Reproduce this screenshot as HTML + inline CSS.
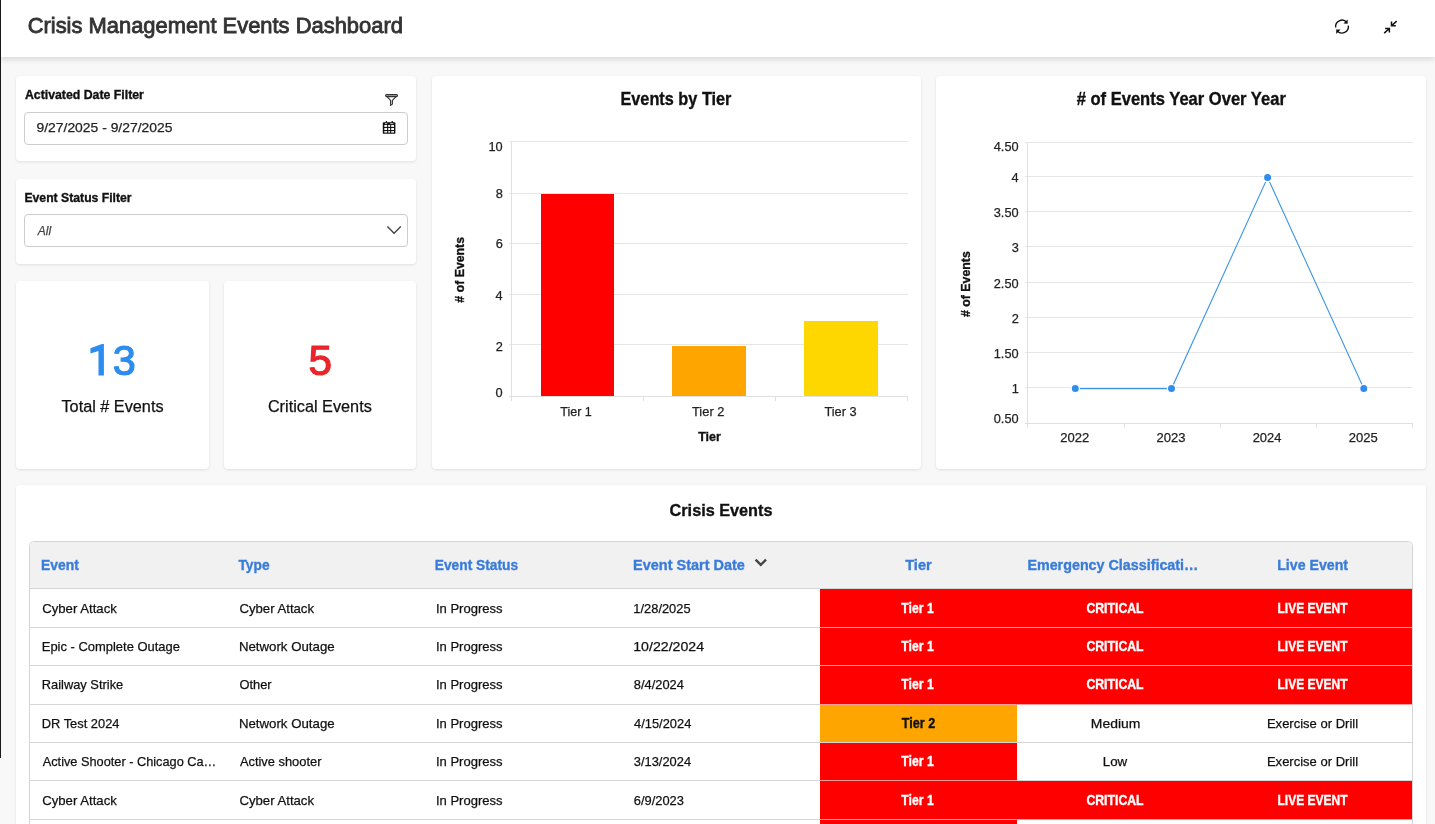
<!DOCTYPE html>
<html><head><meta charset="utf-8">
<style>
*{box-sizing:border-box}
html,body{margin:0;padding:0}
body{width:1435px;height:824px;overflow:hidden;background:#f8f8f8;font-family:"Liberation Sans",sans-serif;position:relative;color:#111}
.abs{position:absolute}
#edge{left:0;top:0;width:1px;height:758px;background:#1a1a1a;z-index:9}
#hdr{left:0;top:0;width:1435px;height:57px;background:#fff;box-shadow:0 3px 5px rgba(0,0,0,.11);z-index:2}
.card{position:absolute;background:#fff;border-radius:4px;box-shadow:0 1px 3px rgba(0,0,0,.10)}
.inp{position:absolute;left:8px;width:384px;height:33px;border:1px solid #cdcdcd;border-radius:4px;background:#fff}
svg text{font-family:"Liberation Sans",sans-serif}
</style></head><body>
<div id="edge" class="abs"></div>
<div id="hdr" class="abs">
  <svg class="abs" style="left:1330px;top:14px" width="24" height="26" viewBox="1330 14 24 26">
    <path d="M1335.66 27.49 A6.4 6.4 0 0 1 1346.76 22.32" fill="none" stroke="#111" stroke-width="1.4"/>
    <path d="M1347.6 19.4 L1347.7 23.7 L1343.5 23.5 Z" fill="#111"/>
    <path d="M1348.34 25.71 A6.4 6.4 0 0 1 1337.24 30.88" fill="none" stroke="#111" stroke-width="1.4"/>
    <path d="M1336.3 33.9 L1336.2 29.4 L1340.5 29.6 Z" fill="#111"/>
  </svg>
  <svg class="abs" style="left:1380px;top:16px" width="22" height="22" viewBox="1380 16 22 22">
    <path d="M1396.7 21.1 L1391.5 25.8 M1391.5 21.5 V25.8 H1395.8" fill="none" stroke="#111" stroke-width="1.5"/>
    <path d="M1384.2 33.1 L1389.4 28.5 M1385.1 28.5 H1389.4 V32.6" fill="none" stroke="#111" stroke-width="1.5"/>
  </svg>
</div>

<div class="card" style="left:16px;top:76px;width:400px;height:85px">
  <div class="inp" style="top:36px"></div>
  <svg class="abs" style="left:366px;top:16px" width="20" height="16" viewBox="382 92 20 16">
    <rect x="385.6" y="94.6" width="11.9" height="2.0" rx="1" fill="#b4b4b4" stroke="#333" stroke-width="1.1"/>
    <path d="M387.2 96.9 L390.6 100.4 V105.4 L392.4 104.1 V100.4 L395.9 96.9" fill="none" stroke="#333" stroke-width="1.15" stroke-linejoin="round"/>
  </svg>
  <svg class="abs" style="left:364px;top:43px" width="18" height="18" viewBox="380 119 18 18">
    <rect x="382.8" y="122.3" width="12.6" height="11.5" rx="0.9" fill="#111"/>
    <rect x="384.3" y="125.0" width="2.8" height="1.9" fill="#fff"/><rect x="384.3" y="128.0" width="2.8" height="2.0" fill="#fff"/><rect x="384.3" y="131.1" width="2.8" height="1.5" fill="#fff"/><rect x="388.2" y="125.0" width="1.9" height="1.9" fill="#fff"/><rect x="388.2" y="128.0" width="1.9" height="2.0" fill="#fff"/><rect x="388.2" y="131.1" width="1.9" height="1.5" fill="#fff"/><rect x="391.2" y="125.0" width="2.8" height="1.9" fill="#fff"/><rect x="391.2" y="128.0" width="2.8" height="2.0" fill="#fff"/><rect x="391.2" y="131.1" width="2.8" height="1.5" fill="#fff"/>
    <rect x="385.0" y="123.2" width="2.2" height="0.9" fill="#fff"/><rect x="390.3" y="123.2" width="3.0" height="0.9" fill="#fff"/>
    <rect x="385.8" y="121.0" width="1.1" height="2.2" fill="#111"/><rect x="391.6" y="121.0" width="1.3" height="2.2" fill="#111"/>
  </svg>
</div>

<div class="card" style="left:16px;top:179px;width:400px;height:85px">
  <div class="inp" style="top:35px"></div>
  <svg class="abs" style="left:368px;top:45px" width="20" height="12" viewBox="384 224 20 12">
    <path d="M387.4 226.6 L394.1 233.3 L400.8 226.6" fill="none" stroke="#444" stroke-width="1.4"/>
  </svg>
</div>

<div class="card" style="left:16px;top:281px;width:193px;height:188px"></div>
<div class="card" style="left:224px;top:281px;width:192px;height:188px"></div>
<div class="card" style="left:432px;top:76px;width:489px;height:393px"></div>
<div class="card" style="left:936px;top:76px;width:490px;height:393px"></div>
<div class="card" style="left:16px;top:485px;width:1410px;height:400px"></div>

<svg class="abs" style="left:0;top:0;z-index:3;will-change:transform" width="1435" height="824" viewBox="0 0 1435 824">
<rect x="509" y="141" width="399" height="1" fill="#e6e6e6"/>
<rect x="509" y="193" width="399" height="1" fill="#e6e6e6"/>
<rect x="509" y="243" width="399" height="1" fill="#e6e6e6"/>
<rect x="509" y="294" width="399" height="1" fill="#e6e6e6"/>
<rect x="509" y="344" width="399" height="1" fill="#e6e6e6"/>
<rect x="511" y="141" width="1" height="259" fill="#e0e0e0"/>
<rect x="509" y="396" width="399" height="1" fill="#e0e0e0"/>
<rect x="511" y="396" width="1" height="5" fill="#e0e0e0"/>
<rect x="643" y="396" width="1" height="5" fill="#e0e0e0"/>
<rect x="775" y="396" width="1" height="5" fill="#e0e0e0"/>
<rect x="907" y="396" width="1" height="5" fill="#e0e0e0"/>
<rect x="541" y="194" width="73" height="202" fill="#ff0000"/>
<rect x="672" y="346" width="74" height="50" fill="#ffa500"/>
<rect x="804" y="321" width="74" height="75" fill="#ffd700"/>
<rect x="1025" y="387" width="388" height="1" fill="#e6e6e6"/>
<rect x="1025" y="352" width="388" height="1" fill="#e6e6e6"/>
<rect x="1025" y="317" width="388" height="1" fill="#e6e6e6"/>
<rect x="1025" y="282" width="388" height="1" fill="#e6e6e6"/>
<rect x="1025" y="246" width="388" height="1" fill="#e6e6e6"/>
<rect x="1025" y="211" width="388" height="1" fill="#e6e6e6"/>
<rect x="1025" y="176" width="388" height="1" fill="#e6e6e6"/>
<rect x="1025" y="142" width="388" height="1" fill="#e6e6e6"/>
<rect x="1027" y="142" width="1" height="285" fill="#e0e0e0"/>
<rect x="1025" y="423" width="388" height="1" fill="#e0e0e0"/>
<rect x="1027" y="423" width="1" height="5" fill="#e0e0e0"/>
<rect x="1124" y="423" width="1" height="5" fill="#e0e0e0"/>
<rect x="1220" y="423" width="1" height="5" fill="#e0e0e0"/>
<rect x="1316" y="423" width="1" height="5" fill="#e0e0e0"/>
<rect x="1412" y="423" width="1" height="5" fill="#e0e0e0"/>
<polyline points="1075.3,388.6 1171.5,388.6 1267.6,177.6 1363.8,388.6" fill="none" stroke="#3d95e6" stroke-width="1.1"/>
<circle cx="1075.3" cy="388.6" r="4.1" fill="#2f8eeb" stroke="#fff" stroke-width="1.2"/>
<circle cx="1171.5" cy="388.6" r="4.1" fill="#2f8eeb" stroke="#fff" stroke-width="1.2"/>
<circle cx="1267.6" cy="177.6" r="4.1" fill="#2f8eeb" stroke="#fff" stroke-width="1.2"/>
<circle cx="1363.8" cy="388.6" r="4.1" fill="#2f8eeb" stroke="#fff" stroke-width="1.2"/>
<path d="M29.5 900 V545.5 Q29.5 541.5 33.5 541.5 H1408.5 Q1412.5 541.5 1412.5 545.5 V900" fill="#fff" stroke="#d5d5d5" stroke-width="1"/>
<path d="M30 589.0 V545.5 Q30 542 33.5 542 H1408.5 Q1412 542 1412 545.5 V589.0 Z" fill="#f1f1f1"/>
<rect x="30" y="588.0" width="1382" height="1" fill="#d5d5d5"/>
<rect x="820" y="589" width="197" height="38" fill="#ff0000"/>
<rect x="1017" y="589" width="197" height="38" fill="#ff0000"/>
<rect x="1214" y="589" width="198" height="38" fill="#ff0000"/>
<rect x="820" y="627" width="197" height="39" fill="#ff0000"/>
<rect x="1017" y="627" width="197" height="39" fill="#ff0000"/>
<rect x="1214" y="627" width="198" height="39" fill="#ff0000"/>
<rect x="820" y="666" width="197" height="38" fill="#ff0000"/>
<rect x="1017" y="666" width="197" height="38" fill="#ff0000"/>
<rect x="1214" y="666" width="198" height="38" fill="#ff0000"/>
<rect x="820" y="704" width="197" height="39" fill="#ffa500"/>
<rect x="820" y="743" width="197" height="38" fill="#ff0000"/>
<rect x="820" y="781" width="197" height="38" fill="#ff0000"/>
<rect x="1017" y="781" width="197" height="38" fill="#ff0000"/>
<rect x="1214" y="781" width="198" height="38" fill="#ff0000"/>
<rect x="820" y="819" width="197" height="39" fill="#ff0000"/>
<rect x="30" y="627" width="1382" height="1" fill="#d6d6d6"/>
<rect x="820" y="627" width="197" height="1" fill="#ff9c9c"/>
<rect x="1017" y="627" width="197" height="1" fill="#ff9c9c"/>
<rect x="1214" y="627" width="198" height="1" fill="#ff9c9c"/>
<rect x="30" y="665" width="1382" height="1" fill="#d6d6d6"/>
<rect x="820" y="665" width="197" height="1" fill="#ff9c9c"/>
<rect x="1017" y="665" width="197" height="1" fill="#ff9c9c"/>
<rect x="1214" y="665" width="198" height="1" fill="#ff9c9c"/>
<rect x="30" y="704" width="1382" height="1" fill="#d6d6d6"/>
<rect x="820" y="704" width="197" height="1" fill="#ff9c9c"/>
<rect x="1017" y="704" width="197" height="1" fill="#ff9c9c"/>
<rect x="1214" y="704" width="198" height="1" fill="#ff9c9c"/>
<rect x="30" y="742" width="1382" height="1" fill="#d6d6d6"/>
<rect x="30" y="780" width="1382" height="1" fill="#d6d6d6"/>
<rect x="820" y="780" width="197" height="1" fill="#ff9c9c"/>
<rect x="30" y="819" width="1382" height="1" fill="#d6d6d6"/>
<rect x="820" y="819" width="197" height="1" fill="#ff9c9c"/>
<rect x="1017" y="819" width="197" height="1" fill="#ff9c9c"/>
<rect x="1214" y="819" width="198" height="1" fill="#ff9c9c"/>
<rect x="30" y="857" width="1382" height="1" fill="#d6d6d6"/>
<rect x="820" y="857" width="197" height="1" fill="#ff9c9c"/>
<path d="M90.4 348.2 L101.9 343.9 H103.9 V375.5 H98.5 V350.9 L90.4 353.4 Z" fill="#2c8cef"/>
<path d="M755.6 559.6 L760.8 564.8 L766 559.6" fill="none" stroke="#444" stroke-width="2.4"/>
<text x="27.65" y="33.30" font-size="22.464" fill="#333" stroke="#333" stroke-width="0.85" textLength="375.28" lengthAdjust="spacingAndGlyphs">Crisis Management Events Dashboard</text>
<text x="24.93" y="99.20" font-size="12.638" fill="#111" stroke="#111" stroke-width="0.35" font-weight="bold" textLength="118.97" lengthAdjust="spacingAndGlyphs">Activated Date Filter</text>
<text x="36.51" y="132.30" font-size="13.478" fill="#222" stroke="#222" stroke-width="0.25" textLength="135.95" lengthAdjust="spacingAndGlyphs">9/27/2025 - 9/27/2025</text>
<text x="24.45" y="201.90" font-size="12.638" fill="#111" stroke="#111" stroke-width="0.35" font-weight="bold" textLength="107.18" lengthAdjust="spacingAndGlyphs">Event Status Filter</text>
<text x="37.69" y="235.00" font-size="13.623" fill="#444" stroke="#444" stroke-width="0.25" font-style="italic" textLength="13.36" lengthAdjust="spacingAndGlyphs">All</text>
<text x="112.72" y="375.20" font-size="43.188" fill="#2c8cef" stroke="#2c8cef" stroke-width="1.2" textLength="23.08" lengthAdjust="spacingAndGlyphs">3</text>
<text x="61.48" y="412.10" font-size="16.522" fill="#111" stroke="#111" stroke-width="0.25" textLength="102.09" lengthAdjust="spacingAndGlyphs">Total # Events</text>
<text x="308.58" y="375.20" font-size="43.188" fill="#ec2329" stroke="#ec2329" stroke-width="1.2" textLength="23.55" lengthAdjust="spacingAndGlyphs">5</text>
<text x="267.89" y="412.10" font-size="16.522" fill="#111" stroke="#111" stroke-width="0.25" textLength="103.93" lengthAdjust="spacingAndGlyphs">Critical Events</text>
<text x="620.46" y="105.40" font-size="17.855" fill="#111" stroke="#111" stroke-width="0.35" font-weight="bold" textLength="111.02" lengthAdjust="spacingAndGlyphs">Events by Tier</text>
<text x="488.45" y="150.90" font-size="13.188" fill="#222" stroke="#222" stroke-width="0.25" textLength="14.22" lengthAdjust="spacingAndGlyphs">10</text>
<text x="495.73" y="198.00" font-size="13.188" fill="#222" stroke="#222" stroke-width="0.25" textLength="7.11" lengthAdjust="spacingAndGlyphs">8</text>
<text x="495.73" y="248.40" font-size="13.188" fill="#222" stroke="#222" stroke-width="0.25" textLength="7.11" lengthAdjust="spacingAndGlyphs">6</text>
<text x="495.48" y="299.50" font-size="13.188" fill="#222" stroke="#222" stroke-width="0.25" textLength="7.11" lengthAdjust="spacingAndGlyphs">4</text>
<text x="495.73" y="350.50" font-size="13.188" fill="#222" stroke="#222" stroke-width="0.25" textLength="7.11" lengthAdjust="spacingAndGlyphs">2</text>
<text x="495.48" y="397.10" font-size="13.188" fill="#222" stroke="#222" stroke-width="0.25" textLength="7.11" lengthAdjust="spacingAndGlyphs">0</text>
<text x="560.19" y="415.60" font-size="13.478" fill="#222" stroke="#222" stroke-width="0.25" textLength="31.62" lengthAdjust="spacingAndGlyphs">Tier 1</text>
<text x="691.99" y="415.60" font-size="13.478" fill="#222" stroke="#222" stroke-width="0.25" textLength="32.45" lengthAdjust="spacingAndGlyphs">Tier 2</text>
<text x="824.39" y="415.60" font-size="13.478" fill="#222" stroke="#222" stroke-width="0.25" textLength="32.20" lengthAdjust="spacingAndGlyphs">Tier 3</text>
<text x="698.17" y="441.10" font-size="13.217" fill="#111" stroke="#111" stroke-width="0.35" font-weight="bold" textLength="22.67" lengthAdjust="spacingAndGlyphs">Tier</text>
<text transform="translate(464.20 302.63) rotate(-90)" x="0" y="0" font-size="13.217" fill="#111" stroke="#111" stroke-width="0.35" font-weight="bold" textLength="65.71" lengthAdjust="spacingAndGlyphs"># of Events</text>
<text x="1076.64" y="105.40" font-size="17.855" fill="#111" stroke="#111" stroke-width="0.35" font-weight="bold" textLength="209.23" lengthAdjust="spacingAndGlyphs"># of Events Year Over Year</text>
<text x="993.78" y="423.40" font-size="13.188" fill="#222" stroke="#222" stroke-width="0.25" textLength="24.87" lengthAdjust="spacingAndGlyphs">0.50</text>
<text x="1011.73" y="393.03" font-size="13.188" fill="#222" stroke="#222" stroke-width="0.25" textLength="7.11" lengthAdjust="spacingAndGlyphs">1</text>
<text x="993.78" y="357.87" font-size="13.188" fill="#222" stroke="#222" stroke-width="0.25" textLength="24.87" lengthAdjust="spacingAndGlyphs">1.50</text>
<text x="1011.73" y="322.70" font-size="13.188" fill="#222" stroke="#222" stroke-width="0.25" textLength="7.11" lengthAdjust="spacingAndGlyphs">2</text>
<text x="993.78" y="287.54" font-size="13.188" fill="#222" stroke="#222" stroke-width="0.25" textLength="24.87" lengthAdjust="spacingAndGlyphs">2.50</text>
<text x="1011.73" y="252.38" font-size="13.188" fill="#222" stroke="#222" stroke-width="0.25" textLength="7.11" lengthAdjust="spacingAndGlyphs">3</text>
<text x="993.78" y="217.21" font-size="13.188" fill="#222" stroke="#222" stroke-width="0.25" textLength="24.87" lengthAdjust="spacingAndGlyphs">3.50</text>
<text x="1011.49" y="182.04" font-size="13.188" fill="#222" stroke="#222" stroke-width="0.25" textLength="7.11" lengthAdjust="spacingAndGlyphs">4</text>
<text x="993.78" y="150.90" font-size="13.188" fill="#222" stroke="#222" stroke-width="0.25" textLength="24.87" lengthAdjust="spacingAndGlyphs">4.50</text>
<text x="1060.33" y="442.00" font-size="13.188" fill="#222" stroke="#222" stroke-width="0.25" textLength="29.00" lengthAdjust="spacingAndGlyphs">2022</text>
<text x="1156.51" y="442.00" font-size="13.188" fill="#222" stroke="#222" stroke-width="0.25" textLength="29.00" lengthAdjust="spacingAndGlyphs">2023</text>
<text x="1252.68" y="442.00" font-size="13.188" fill="#222" stroke="#222" stroke-width="0.25" textLength="28.75" lengthAdjust="spacingAndGlyphs">2024</text>
<text x="1348.86" y="442.00" font-size="13.188" fill="#222" stroke="#222" stroke-width="0.25" textLength="29.00" lengthAdjust="spacingAndGlyphs">2025</text>
<text transform="translate(970.30 317.03) rotate(-90)" x="0" y="0" font-size="13.217" fill="#111" stroke="#111" stroke-width="0.35" font-weight="bold" textLength="65.81" lengthAdjust="spacingAndGlyphs"># of Events</text>
<text x="669.58" y="515.60" font-size="17.420" fill="#111" stroke="#111" stroke-width="0.35" font-weight="bold" textLength="102.86" lengthAdjust="spacingAndGlyphs">Crisis Events</text>
<text x="40.93" y="570.30" font-size="14.812" fill="#3a7cd9" stroke="#3a7cd9" stroke-width="0.35" font-weight="bold" textLength="37.94" lengthAdjust="spacingAndGlyphs">Event</text>
<text x="238.48" y="570.30" font-size="14.812" fill="#3a7cd9" stroke="#3a7cd9" stroke-width="0.35" font-weight="bold" textLength="31.10" lengthAdjust="spacingAndGlyphs">Type</text>
<text x="434.75" y="570.30" font-size="14.812" fill="#3a7cd9" stroke="#3a7cd9" stroke-width="0.35" font-weight="bold" textLength="83.37" lengthAdjust="spacingAndGlyphs">Event Status</text>
<text x="633.10" y="570.30" font-size="14.812" fill="#3a7cd9" stroke="#3a7cd9" stroke-width="0.35" font-weight="bold" textLength="111.78" lengthAdjust="spacingAndGlyphs">Event Start Date</text>
<text x="905.17" y="570.30" font-size="14.812" fill="#3a7cd9" stroke="#3a7cd9" stroke-width="0.35" font-weight="bold" textLength="26.57" lengthAdjust="spacingAndGlyphs">Tier</text>
<text x="1027.41" y="570.30" font-size="14.812" fill="#3a7cd9" stroke="#3a7cd9" stroke-width="0.35" font-weight="bold" textLength="170.94" lengthAdjust="spacingAndGlyphs">Emergency Classificati…</text>
<text x="1277.22" y="570.30" font-size="14.812" fill="#3a7cd9" stroke="#3a7cd9" stroke-width="0.35" font-weight="bold" textLength="70.82" lengthAdjust="spacingAndGlyphs">Live Event</text>
<text x="42.23" y="612.60" font-size="13.333" fill="#111" stroke="#111" stroke-width="0.25" textLength="74.61" lengthAdjust="spacingAndGlyphs">Cyber Attack</text>
<text x="239.43" y="612.60" font-size="13.333" fill="#111" stroke="#111" stroke-width="0.25" textLength="74.61" lengthAdjust="spacingAndGlyphs">Cyber Attack</text>
<text x="435.90" y="612.60" font-size="13.333" fill="#111" stroke="#111" stroke-width="0.25" textLength="66.67" lengthAdjust="spacingAndGlyphs">In Progress</text>
<text x="633.36" y="612.60" font-size="13.333" fill="#111" stroke="#111" stroke-width="0.25" textLength="57.22" lengthAdjust="spacingAndGlyphs">1/28/2025</text>
<text x="901.27" y="612.60" font-size="13.797" fill="#fff" stroke="#fff" stroke-width="0.35" font-weight="bold" textLength="32.50" lengthAdjust="spacingAndGlyphs">Tier 1</text>
<text x="1086.43" y="612.60" font-size="13.797" fill="#fff" stroke="#fff" stroke-width="0.35" font-weight="bold" textLength="57.17" lengthAdjust="spacingAndGlyphs">CRITICAL</text>
<text x="1277.52" y="612.60" font-size="13.797" fill="#fff" stroke="#fff" stroke-width="0.35" font-weight="bold" textLength="70.05" lengthAdjust="spacingAndGlyphs">LIVE EVENT</text>
<text x="41.75" y="651.00" font-size="13.333" fill="#111" stroke="#111" stroke-width="0.25" textLength="138.21" lengthAdjust="spacingAndGlyphs">Epic - Complete Outage</text>
<text x="238.93" y="651.00" font-size="13.333" fill="#111" stroke="#111" stroke-width="0.25" textLength="95.70" lengthAdjust="spacingAndGlyphs">Network Outage</text>
<text x="435.90" y="651.00" font-size="13.333" fill="#111" stroke="#111" stroke-width="0.25" textLength="66.67" lengthAdjust="spacingAndGlyphs">In Progress</text>
<text x="633.26" y="651.00" font-size="13.333" fill="#111" stroke="#111" stroke-width="0.25" textLength="70.84" lengthAdjust="spacingAndGlyphs">10/22/2024</text>
<text x="901.27" y="651.00" font-size="13.797" fill="#fff" stroke="#fff" stroke-width="0.35" font-weight="bold" textLength="32.50" lengthAdjust="spacingAndGlyphs">Tier 1</text>
<text x="1086.43" y="651.00" font-size="13.797" fill="#fff" stroke="#fff" stroke-width="0.35" font-weight="bold" textLength="57.17" lengthAdjust="spacingAndGlyphs">CRITICAL</text>
<text x="1277.52" y="651.00" font-size="13.797" fill="#fff" stroke="#fff" stroke-width="0.35" font-weight="bold" textLength="70.05" lengthAdjust="spacingAndGlyphs">LIVE EVENT</text>
<text x="41.76" y="689.40" font-size="13.333" fill="#111" stroke="#111" stroke-width="0.25" textLength="81.48" lengthAdjust="spacingAndGlyphs">Railway Strike</text>
<text x="239.44" y="689.40" font-size="13.333" fill="#111" stroke="#111" stroke-width="0.25" textLength="32.18" lengthAdjust="spacingAndGlyphs">Other</text>
<text x="435.90" y="689.40" font-size="13.333" fill="#111" stroke="#111" stroke-width="0.25" textLength="66.67" lengthAdjust="spacingAndGlyphs">In Progress</text>
<text x="633.84" y="689.40" font-size="13.333" fill="#111" stroke="#111" stroke-width="0.25" textLength="50.07" lengthAdjust="spacingAndGlyphs">8/4/2024</text>
<text x="901.27" y="689.40" font-size="13.797" fill="#fff" stroke="#fff" stroke-width="0.35" font-weight="bold" textLength="32.50" lengthAdjust="spacingAndGlyphs">Tier 1</text>
<text x="1086.43" y="689.40" font-size="13.797" fill="#fff" stroke="#fff" stroke-width="0.35" font-weight="bold" textLength="57.17" lengthAdjust="spacingAndGlyphs">CRITICAL</text>
<text x="1277.52" y="689.40" font-size="13.797" fill="#fff" stroke="#fff" stroke-width="0.35" font-weight="bold" textLength="70.05" lengthAdjust="spacingAndGlyphs">LIVE EVENT</text>
<text x="41.76" y="727.80" font-size="13.333" fill="#111" stroke="#111" stroke-width="0.25" textLength="77.70" lengthAdjust="spacingAndGlyphs">DR Test 2024</text>
<text x="238.93" y="727.80" font-size="13.333" fill="#111" stroke="#111" stroke-width="0.25" textLength="95.70" lengthAdjust="spacingAndGlyphs">Network Outage</text>
<text x="435.90" y="727.80" font-size="13.333" fill="#111" stroke="#111" stroke-width="0.25" textLength="66.67" lengthAdjust="spacingAndGlyphs">In Progress</text>
<text x="634.08" y="727.80" font-size="13.333" fill="#111" stroke="#111" stroke-width="0.25" textLength="57.22" lengthAdjust="spacingAndGlyphs">4/15/2024</text>
<text x="901.77" y="727.80" font-size="13.797" fill="#111" stroke="#111" stroke-width="0.35" font-weight="bold" textLength="33.54" lengthAdjust="spacingAndGlyphs">Tier 2</text>
<text x="1090.88" y="727.80" font-size="13.333" fill="#111" stroke="#111" stroke-width="0.25" textLength="49.54" lengthAdjust="spacingAndGlyphs">Medium</text>
<text x="1266.95" y="727.80" font-size="13.333" fill="#111" stroke="#111" stroke-width="0.25" textLength="91.12" lengthAdjust="spacingAndGlyphs">Exercise or Drill</text>
<text x="42.73" y="766.20" font-size="13.333" fill="#111" stroke="#111" stroke-width="0.25" textLength="173.62" lengthAdjust="spacingAndGlyphs">Active Shooter - Chicago Ca…</text>
<text x="239.93" y="766.20" font-size="13.333" fill="#111" stroke="#111" stroke-width="0.25" textLength="81.50" lengthAdjust="spacingAndGlyphs">Active shooter</text>
<text x="435.90" y="766.20" font-size="13.333" fill="#111" stroke="#111" stroke-width="0.25" textLength="66.67" lengthAdjust="spacingAndGlyphs">In Progress</text>
<text x="633.84" y="766.20" font-size="13.333" fill="#111" stroke="#111" stroke-width="0.25" textLength="57.22" lengthAdjust="spacingAndGlyphs">3/13/2024</text>
<text x="901.27" y="766.20" font-size="13.797" fill="#fff" stroke="#fff" stroke-width="0.35" font-weight="bold" textLength="32.50" lengthAdjust="spacingAndGlyphs">Tier 1</text>
<text x="1102.83" y="766.20" font-size="13.333" fill="#111" stroke="#111" stroke-width="0.25" textLength="24.40" lengthAdjust="spacingAndGlyphs">Low</text>
<text x="1266.95" y="766.20" font-size="13.333" fill="#111" stroke="#111" stroke-width="0.25" textLength="91.12" lengthAdjust="spacingAndGlyphs">Exercise or Drill</text>
<text x="42.23" y="804.60" font-size="13.333" fill="#111" stroke="#111" stroke-width="0.25" textLength="74.61" lengthAdjust="spacingAndGlyphs">Cyber Attack</text>
<text x="239.43" y="804.60" font-size="13.333" fill="#111" stroke="#111" stroke-width="0.25" textLength="74.61" lengthAdjust="spacingAndGlyphs">Cyber Attack</text>
<text x="435.90" y="804.60" font-size="13.333" fill="#111" stroke="#111" stroke-width="0.25" textLength="66.67" lengthAdjust="spacingAndGlyphs">In Progress</text>
<text x="633.84" y="804.60" font-size="13.333" fill="#111" stroke="#111" stroke-width="0.25" textLength="50.07" lengthAdjust="spacingAndGlyphs">6/9/2023</text>
<text x="901.27" y="804.60" font-size="13.797" fill="#fff" stroke="#fff" stroke-width="0.35" font-weight="bold" textLength="32.50" lengthAdjust="spacingAndGlyphs">Tier 1</text>
<text x="1086.43" y="804.60" font-size="13.797" fill="#fff" stroke="#fff" stroke-width="0.35" font-weight="bold" textLength="57.17" lengthAdjust="spacingAndGlyphs">CRITICAL</text>
<text x="1277.52" y="804.60" font-size="13.797" fill="#fff" stroke="#fff" stroke-width="0.35" font-weight="bold" textLength="70.05" lengthAdjust="spacingAndGlyphs">LIVE EVENT</text>
<text x="901.27" y="843.00" font-size="13.797" fill="#fff" stroke="#fff" stroke-width="0.35" font-weight="bold" textLength="32.50" lengthAdjust="spacingAndGlyphs">Tier 1</text>
</svg>
</body></html>
